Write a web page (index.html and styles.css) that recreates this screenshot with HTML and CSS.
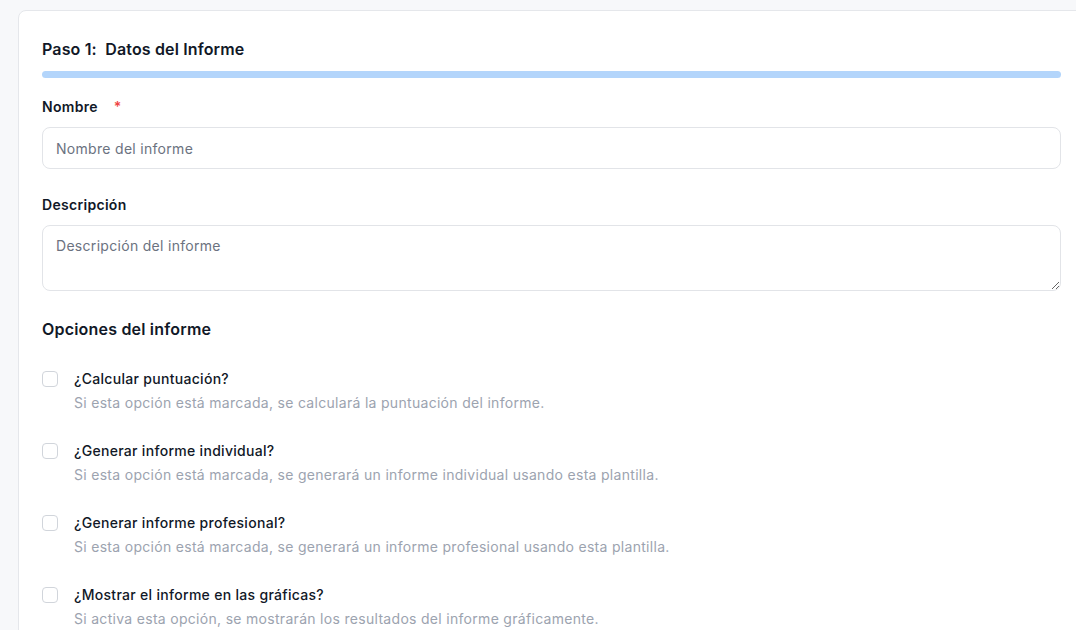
FILE: index.html
```html
<!DOCTYPE html>
<html lang="es">
<head>
<meta charset="utf-8">
<title>Paso 1: Datos del Informe</title>
<link rel="stylesheet" href="styles.css">
</head>
<body>
<div class="card">
  <h2 class="step-title">Paso 1:&nbsp; Datos del Informe</h2>
  <div class="progress"><div class="progress-fill"></div></div>

  <div class="field">
    <label class="label" for="nombre">Nombre <span class="req">*</span></label>
    <input class="input" id="nombre" type="text" placeholder="Nombre del informe">
  </div>

  <div class="field">
    <label class="label" for="desc">Descripción</label>
    <textarea class="textarea" id="desc" placeholder="Descripción del informe"></textarea>
  </div>

  <h3 class="section-title">Opciones del informe</h3>

  <div class="options">
    <label class="option">
      <input type="checkbox" class="check">
      <span class="option-text">
        <span class="option-title">¿Calcular puntuación?</span>
        <span class="option-desc">Si esta opción está marcada, se calculará la puntuación del informe.</span>
      </span>
    </label>
    <label class="option">
      <input type="checkbox" class="check">
      <span class="option-text">
        <span class="option-title">¿Generar informe individual?</span>
        <span class="option-desc">Si esta opción está marcada, se generará un informe individual usando esta plantilla.</span>
      </span>
    </label>
    <label class="option">
      <input type="checkbox" class="check">
      <span class="option-text">
        <span class="option-title">¿Generar informe profesional?</span>
        <span class="option-desc">Si esta opción está marcada, se generará un informe profesional usando esta plantilla.</span>
      </span>
    </label>
    <label class="option">
      <input type="checkbox" class="check">
      <span class="option-text">
        <span class="option-title">¿Mostrar el informe en las gráficas?</span>
        <span class="option-desc">Si activa esta opción, se mostrarán los resultados del informe gráficamente.</span>
      </span>
    </label>
  </div>
</div>
</body>
</html>
```

FILE: styles.css
```css
* { box-sizing: border-box; }
html, body {
  margin: 0;
  padding: 0;
  background: #f7f8fa;
  overflow: hidden;
  height: 630px;
}
body {
  font-family: Inter, "Noto Sans", sans-serif;
  color: #111827;
  padding: 10px 0 0 18px;
}
.card {
  width: 1067px;
  background: #fff;
  border: 1px solid #e5e7eb;
  border-radius: 8px;
  padding: 26px 23px 40px 23px;
}
.step-title {
  margin: 0;
  font-size: 16px;
  font-weight: 600;
  line-height: 24px;
  letter-spacing: 0.15px;
  color: #111827;
}
.progress {
  margin-top: 10px;
  height: 7px;
  border-radius: 4px;
  background: #b3d5fb;
}
.progress-fill { width: 100%; height: 100%; }
.field {
  display: flex;
  flex-direction: column;
  margin-top: 19px;
}
.field + .field { margin-top: 26px; }
.label {
  font-size: 14px;
  font-weight: 600;
  line-height: 20px;
  letter-spacing: 0.3px;
  color: #111827;
  margin-bottom: 10px;
}
.req {
  color: #ef4444;
  margin-left: 12px;
}
.input, .textarea {
  font-family: inherit;
  font-size: 14px;
  letter-spacing: 0.3px;
  color: #111827;
  border: 1px solid #e2e4e8;
  border-radius: 8px;
  background: #fff;
  padding: 0 13px;
  width: 100%;
  outline: none;
}
.input { height: 42px; }
.textarea {
  height: 66px;
  padding-top: 10px;
  line-height: 20px;
  resize: vertical;
}
.input::placeholder, .textarea::placeholder { color: #6b7280; }
.section-title {
  margin: 26px 0 0 0;
  font-size: 16px;
  font-weight: 600;
  line-height: 24px;
  letter-spacing: 0.2px;
}
.options {
  margin-top: 28px;
  display: flex;
  flex-direction: column;
  gap: 28px;
}
.option {
  display: flex;
  align-items: flex-start;
  gap: 16px;
}
.check {
  appearance: none;
  -webkit-appearance: none;
  width: 16px;
  height: 16px;
  margin: 2px 0 0 0;
  border: 1px solid #d1d5db;
  border-radius: 4px;
  background: #fff;
  flex-shrink: 0;
}
.option-text {
  display: flex;
  flex-direction: column;
  gap: 4px;
}
.option-title {
  font-size: 14px;
  font-weight: 500;
  line-height: 20px;
  letter-spacing: 0.3px;
  color: #111827;
}
.option-desc {
  font-size: 14px;
  line-height: 20px;
  letter-spacing: 0.3px;
  color: #9ca3af;
}
```
